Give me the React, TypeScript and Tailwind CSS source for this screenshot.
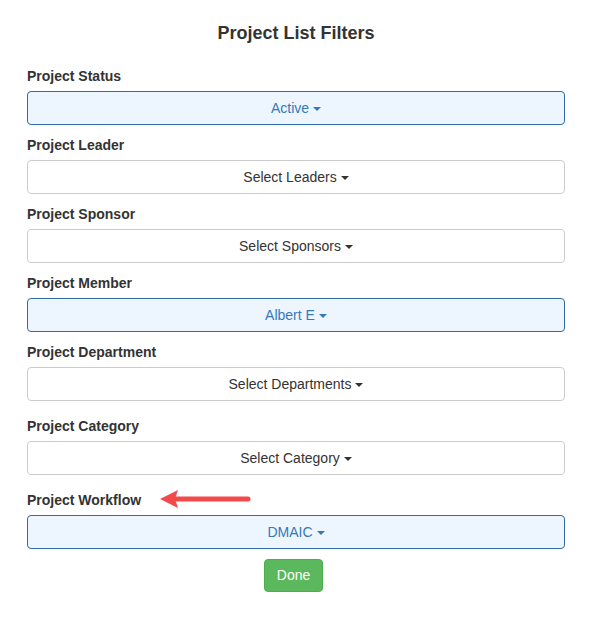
import React from "react";

type Filter = {
  label: string;
  value: string;
  active?: boolean;
  gap: string;
};

const filters: Filter[] = [
  { label: "Project Status", value: "Active", active: true, gap: "mt-[23px]" },
  { label: "Project Leader", value: "Select Leaders", gap: "mt-[11px]" },
  { label: "Project Sponsor", value: "Select Sponsors", gap: "mt-[11px]" },
  { label: "Project Member", value: "Albert E", active: true, gap: "mt-[11px]" },
  { label: "Project Department", value: "Select Departments", gap: "mt-[11px]" },
  { label: "Project Category", value: "Select Category", gap: "mt-[16px]" },
  { label: "Project Workflow", value: "DMAIC", active: true, gap: "mt-[16px]" },
];

const Caret = () => (
  <span className="inline-block ml-[4px] align-middle w-0 h-0 border-t-[4px] border-t-current border-x-[4px] border-x-transparent" />
);

const App: React.FC = () => {
  return (
    <div className="relative w-[589px] h-[618px] bg-white text-[#333] font-['Liberation_Sans',Arial,sans-serif]">
      <div className="pt-[22px] pl-[27px] w-[565px] flex flex-col">
        <h2 className="text-center text-[18px] leading-[22px] font-bold">Project List Filters</h2>

        {filters.map((f) => (
          <div key={f.label} className={f.gap}>
            <div className="text-[14px] leading-[18px] font-bold mb-[6px]">{f.label}</div>
            <button
              className={
                f.active
                  ? "w-full h-[34px] rounded-[4px] border border-[#2e6da4] bg-[#edf5fe] text-[#337ab7] text-[14px]"
                  : "w-full h-[34px] rounded-[4px] border border-[#cccccc] bg-white text-[#333] text-[14px]"
              }
            >
              {f.value}
              <Caret />
            </button>
          </div>
        ))}

        <div className="mt-[10px] flex justify-center">
          <button className="ml-[-5px] h-[33px] w-[59px] rounded-[4px] border border-[#4cae4c] bg-[#5cb85c] text-white text-[14px]">
            Done
          </button>
        </div>
      </div>

      {/* annotation arrow pointing at the workflow label */}
      <svg className="absolute left-[158px] top-[489px]" width="94" height="20" viewBox="0 0 94 20">
        <line x1="17" y1="10" x2="90" y2="10" stroke="#f24a4a" strokeWidth="5" strokeLinecap="round" />
        <polygon points="2,10 20,1 17,10 20,19" fill="#f24a4a" />
      </svg>
    </div>
  );
};

export default App;
